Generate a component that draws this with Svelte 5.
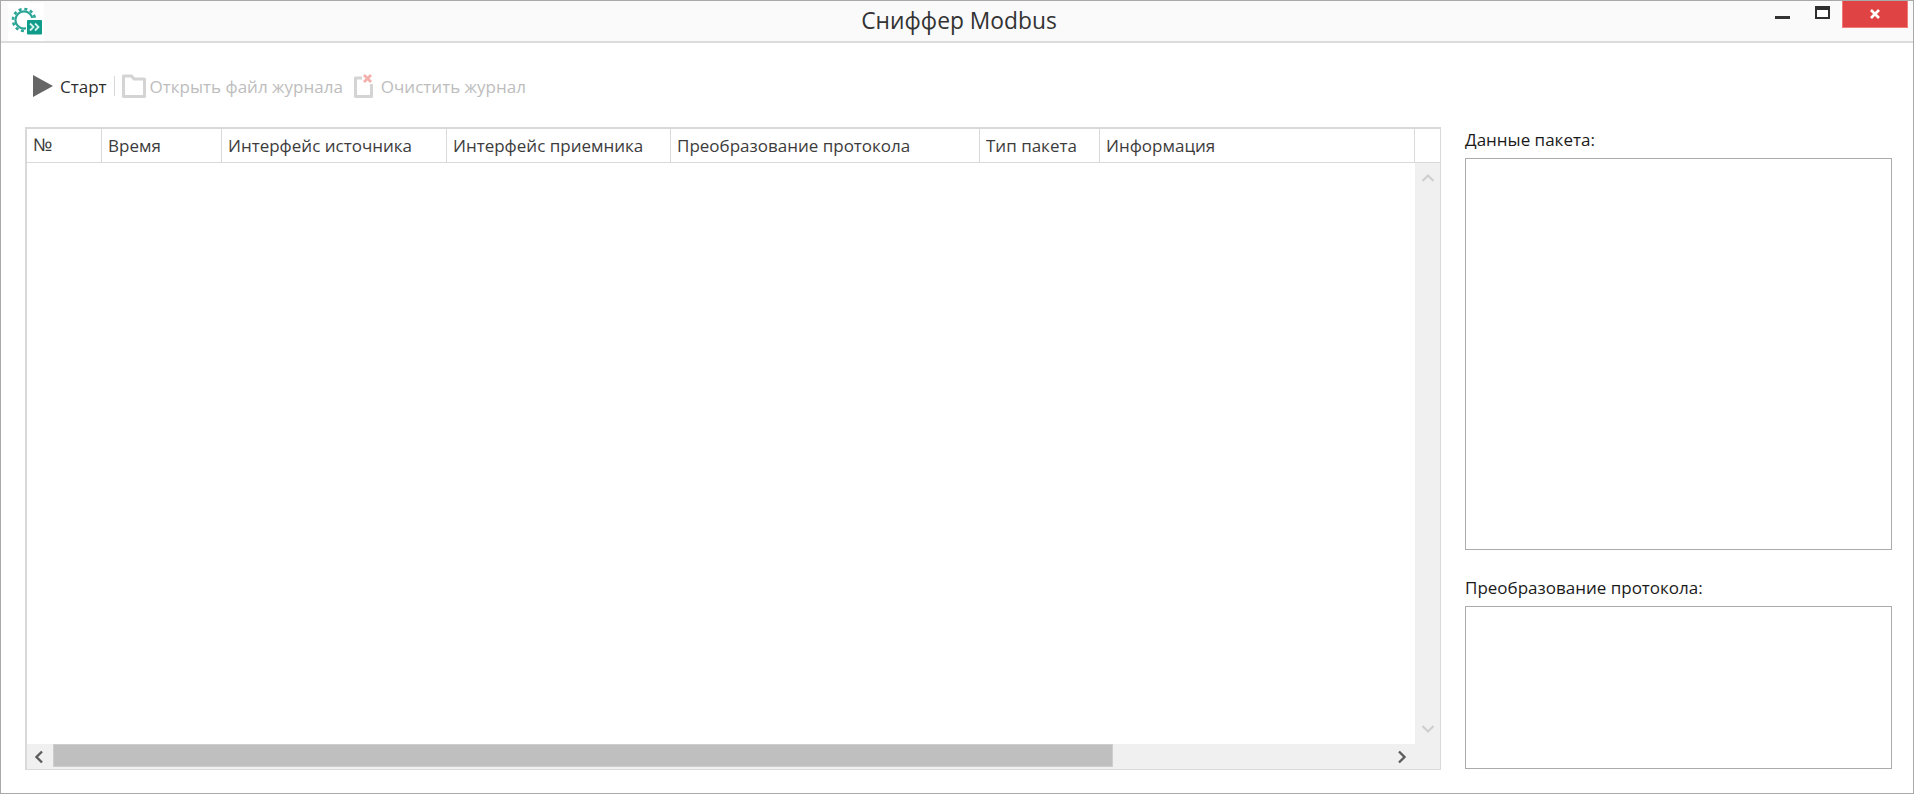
<script>
  const columns = ['№', 'Время', 'Интерфейс источника', 'Интерфейс приемника', 'Преобразование протокола', 'Тип пакета', 'Информация', ''];
</script>

<div class="window">
  <header class="titlebar">
    <div class="appicon">
      <svg width="36" height="38" viewBox="0 0 36 38">
        <g fill="none" stroke="#2aa596">
          <circle cx="16" cy="17" r="8.600" stroke-width="2.200" />
          <circle cx="16" cy="17" r="11" stroke-width="2.600" stroke-dasharray="3 2.760" />
        </g>
        <rect x="18" y="15" width="18" height="17" fill="#fff" />
        <rect x="19" y="17" width="15" height="14.500" rx="1" fill="#109c8a" />
        <path d="M22 20.500l3.500 3.500L22 27.500M27 20.500l3.500 3.500L27 27.500" fill="none" stroke="#d8f2ee" stroke-width="1.800" />
      </svg>
    </div>
    <h1>Сниффер Modbus</h1>
    <div class="controls">
      <span class="min"></span>
      <span class="max"></span>
      <span class="close">
        <svg width="12" height="12" viewBox="0 0 12 12"><path d="M2 2l8 8M10 2l-8 8" stroke="#fff" stroke-width="2.600" /></svg>
      </span>
    </div>
  </header>

  <div class="toolbar">
    <button class="tool start">
      <svg width="20" height="22" viewBox="0 0 20 22"><path d="M0 0L20 11L0 22Z" fill="#666" /></svg>
      <span>Старт</span>
    </button>
    <i class="sep"></i>
    <button class="tool open off">
      <svg width="24" height="24" viewBox="0 0 24 24" fill="none">
        <path d="M1.500 22.500V2h8l2.500 3h10.500v17.500z" stroke="#d4d4d4" stroke-width="3" stroke-linejoin="round" />
      </svg>
      <span>Открыть файл журнала</span>
    </button>
    <button class="tool clear off">
      <svg width="20" height="24" viewBox="0 0 20 24" fill="none">
        <path d="M8 4H1.500V22.500H17.500V10" stroke="#d4d4d4" stroke-width="3" stroke-linejoin="round" />
        <path d="M10 1l7 7M17 1l-7 7" stroke="#f3b0ab" stroke-width="2.800" />
      </svg>
      <span>Очистить журнал</span>
    </button>
  </div>

  <main class="content">
    <section class="table">
      <div class="thead">
        {#each columns as c}
          <div class="th">{c}</div>
        {/each}
      </div>
      <div class="middle">
        <div class="rows"></div>
        <div class="vscroll">
          <svg width="14" height="10" viewBox="0 0 14 10"><path d="M1.500 8L7 2.500 12.500 8" fill="none" stroke="#cfcfcf" stroke-width="2.200" /></svg>
          <svg width="14" height="10" viewBox="0 0 14 10"><path d="M1.500 2L7 7.500 12.500 2" fill="none" stroke="#cfcfcf" stroke-width="2.200" /></svg>
        </div>
      </div>
      <div class="hscroll">
        <span class="arrow back">
          <svg width="10" height="14" viewBox="0 0 10 14"><path d="M8 1.500L2.500 7 8 12.500" fill="none" stroke="#5c5c5c" stroke-width="2.400" /></svg>
        </span>
        <div class="track">
          <div class="thumb"></div>
        </div>
        <span class="arrow">
          <svg width="10" height="14" viewBox="0 0 10 14"><path d="M2 1.500L7.500 7 2 12.500" fill="none" stroke="#5c5c5c" stroke-width="2.400" /></svg>
        </span>
        <span class="corner"></span>
      </div>
    </section>

    <aside class="side">
      <span class="label first">Данные пакета:</span>
      <div class="box big"></div>
      <span class="label second">Преобразование протокола:</span>
      <div class="box small"></div>
    </aside>
  </main>
</div>

<style>
  :global(body) {
    margin: 0;
    background: #fff;
  }
  .window {
    box-sizing: border-box;
    width: 1914px;
    height: 794px;
    border: 1px solid #a9a9a9;
    background: #fff;
    font-family: "Open Sans", "Noto Sans", sans-serif;
    font-size: 17px;
    overflow: hidden;
  }
  .titlebar {
    box-sizing: border-box;
    height: 42px;
    background: #fafafa;
    border-bottom: 2px solid #dcdcdc;
    display: flex;
    align-items: flex-start;
    position: relative;
  }
  .appicon {
    width: 36px;
    height: 38px;
    margin: 2px 0 0 7px;
    background: #fff;
  }
  .appicon svg {
    display: block;
  }
  h1 {
    position: absolute;
    left: 0;
    right: 0;
    top: 0;
    margin: 0;
    padding-left: 4px;
    text-align: center;
    font-size: 22.8px;
    font-weight: 400;
    line-height: 40px;
    color: #333;
  }
  .controls {
    margin-left: auto;
    display: flex;
    position: relative;
  }
  .min {
    width: 15px;
    height: 3px;
    margin: 15px 0 0 0;
    background: #333;
  }
  .max {
    box-sizing: border-box;
    width: 15px;
    height: 13px;
    margin: 5px 0 0 25px;
    background: #fff;
    border: 2px solid #2f2f2f;
    border-top-width: 4px;
  }
  .close {
    box-sizing: border-box;
    width: 66px;
    height: 27px;
    margin: 0 5px 0 12px;
    background: #e04343;
    border: 1px solid #f07a7a;
    border-top: 0;
    display: flex;
    align-items: center;
    justify-content: center;
  }
  .toolbar {
    height: 84px;
    box-sizing: border-box;
    padding: 31px 0 0 32px;
    display: flex;
    align-items: flex-start;
  }
  .tool {
    border: 0;
    padding: 0;
    background: none;
    font: inherit;
    display: flex;
    align-items: center;
    height: 24px;
    color: #2f2f2f;
    white-space: nowrap;
  }
  .tool.off {
    color: #bdbdbd;
  }
  .start svg {
    margin-right: 7px;
  }
  .open svg {
    margin-right: 4px;
  }
  .clear {
    margin-left: 11px;
  }
  .clear svg {
    margin-right: 7px;
  }
  .sep {
    width: 1px;
    height: 20px;
    margin: 2px 7px 0 7px;
    background: #d8d8d8;
  }
  .content {
    display: flex;
    padding-left: 24px;
    align-items: flex-start;
  }
  .table {
    box-sizing: border-box;
    width: 1416px;
    height: 643px;
    border: 2px solid #d9d9d9;
    border-right-width: 1px;
    border-bottom-width: 1px;
    display: flex;
    flex-direction: column;
  }
  .thead {
    display: grid;
    grid-template-columns: 75px 120px 225px 224px 309px 120px 315px 25px;
    height: 33px;
    border-bottom: 1px solid #d9d9d9;
    flex: none;
    box-sizing: content-box;
  }
  .th {
    box-sizing: border-box;
    border-right: 1px solid #d9d9d9;
    padding-left: 6px;
    line-height: 33px;
    color: #3c3c3c;
    white-space: nowrap;
  }
  .th:first-child {
    font-family: "Liberation Sans", sans-serif;
    font-size: 18px;
  }
  .th:last-child {
    border-right: 0;
  }
  .middle {
    flex: 1;
    display: flex;
    min-height: 0;
  }
  .rows {
    flex: 1;
    background: #fff;
  }
  .vscroll {
    width: 25px;
    background: #f0f0f0;
    display: flex;
    flex-direction: column;
    align-items: center;
    justify-content: space-between;
    padding: 10px 0;
    box-sizing: border-box;
  }
  .hscroll {
    flex: none;
    height: 25px;
    background: #f0f0f0;
    display: flex;
    align-items: stretch;
  }
  .arrow {
    width: 26px;
    flex: none;
    display: flex;
    align-items: center;
    justify-content: center;
  }
  .arrow.back {
    box-sizing: border-box;
    padding-right: 2px;
  }
  .track {
    flex: 1;
  }
  .thumb {
    box-sizing: border-box;
    width: 1060px;
    height: 23px;
    background: #bfbfbf;
    border: 1px solid #cdcdcd;
  }
  .corner {
    width: 25px;
    flex: none;
  }
  .side {
    width: 427px;
    margin-left: 24px;
    display: flex;
    flex-direction: column;
    color: #1a1a1a;
  }
  .label {
    display: block;
    line-height: 24px;
    white-space: nowrap;
  }
  .first {
    margin-top: 1px;
  }
  .second {
    margin-top: 26px;
    margin-bottom: 6px;
  }
  .box {
    box-sizing: border-box;
    border: 1px solid #ababab;
    background: #fff;
  }
  .big {
    height: 392px;
    margin-top: 6px;
  }
  .small {
    height: 163px;
  }
</style>
